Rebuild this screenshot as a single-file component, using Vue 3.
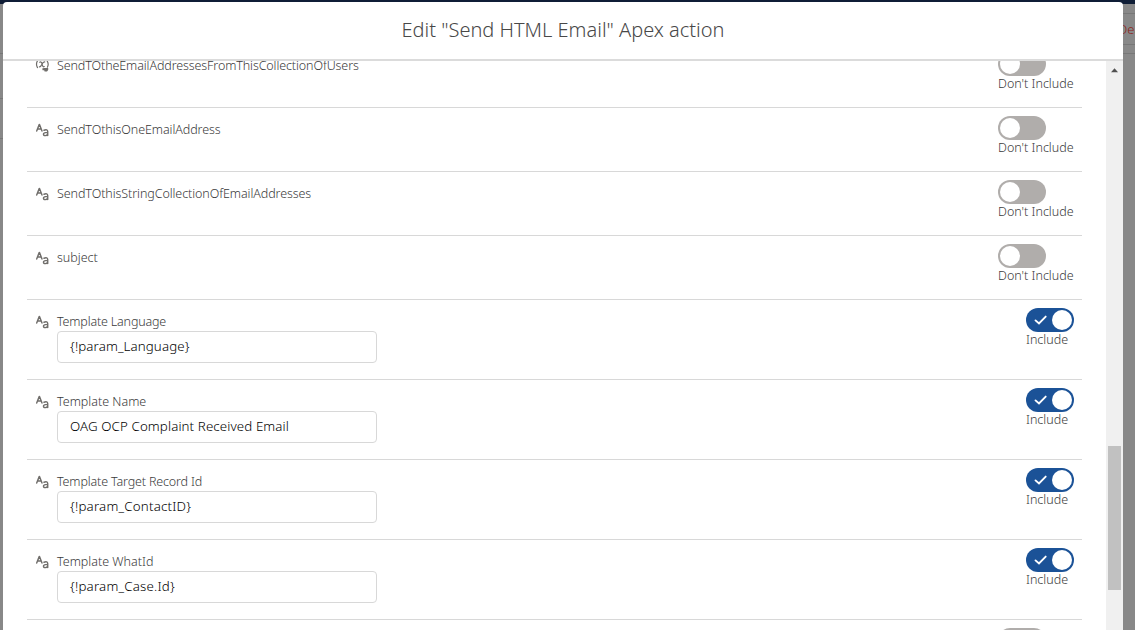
<script setup>
const rows = [
  { label: 'SendTOtheEmailAddressesFromThisCollectionOfUsers', icon: 'collection', tone: 'l1' },
  { label: 'SendTOthisOneEmailAddress', tone: 'l2' },
  { label: 'SendTOthisStringCollectionOfEmailAddresses', tone: 'l3' },
  { label: 'subject', tone: 'l4' },
  { label: 'Template Language', value: '{!param_Language}', tone: 'l5' },
  { label: 'Template Name', value: 'OAG OCP Complaint Received Email', tone: 'l6' },
  { label: 'Template Target Record Id', value: '{!param_ContactID}', tone: 'l7' },
  { label: 'Template WhatId', value: '{!param_Case.Id}', tone: 'l8' },
  { label: '', icon: 'none', tone: 'l9' },
]
</script>

<template>
  <div class="page">
    <div class="gutter left">
      <div class="strip"></div>
      <i class="gl a"></i><i class="gl b"></i><i class="gl c"></i>
    </div>
    <div class="center">
      <div class="topbar"></div>
      <section class="modal">
        <header><h2>Edit "Send HTML Email" Apex action</h2></header>
        <div class="body">
          <div class="list">
            <div v-for="r in rows" :key="r.tone" class="row" :class="{ tall: r.value }">
              <svg v-if="r.icon === 'collection'" class="icon" viewBox="0 0 14 14">
                <g fill="none" stroke="#706e6b" stroke-width="1.2" stroke-linecap="round">
                  <path d="M2.7 1.5Q.4 5 2.5 8.6M11.9 1.5Q14.2 5 12.4 8.2M4.7 3.2Q6.5 2.2 7.1 5Q7.7 8.5 9.2 7.6M9.7 2.8Q8.2 2.6 7.1 5Q5.8 8 4.4 7.8" />
                </g>
                <path d="M7.2 9.6 9 8.9H13.2V11L12 12.4H9.6L9.2 11.2H7.6Z" fill="#706e6b" />
              </svg>
              <svg v-else-if="!r.icon" class="icon" viewBox="0 0 14 14">
                <g fill="none" stroke="#706e6b" stroke-width="1.45" stroke-linecap="round" stroke-linejoin="round">
                  <path d="M1.7 8 4.2 1.5H4.5L7 8M2.5 6H6.2" />
                  <path d="M9 7.2Q12.5 6 12.7 8.5V12.6M12.5 9.6H10.6Q8.5 9.7 8.5 11.2T10.4 12.6Q11.9 12.5 12.6 11.5" />
                </g>
              </svg>
              <span v-else class="icon"></span>
              <div class="field">
                <div class="label" :class="r.tone"><span>{{ r.label }}</span></div>
                <div v-if="r.value" class="input" :class="'v' + r.tone"><span>{{ r.value }}</span></div>
              </div>
              <div class="control" :class="{ on: r.value }">
                <div class="toggle">
                  <svg v-if="r.value" viewBox="0 0 14 12"><path d="M1.5 6.4 5 9.5 11.7 2.6" fill="none" stroke="#fff" stroke-width="1.9" stroke-linecap="round" /></svg>
                  <b></b>
                </div>
                <div v-if="r.label" class="state">{{ r.value ? 'Include' : "Don't Include" }}</div>
              </div>
            </div>
          </div>
          <div class="scrollbar">
            <svg viewBox="0 0 17 17"><path d="M5 11.2H12L8.5 7.3Z" fill="#505050" /></svg>
            <div class="thumb"></div>
          </div>
        </div>
      </section>
    </div>
    <div class="gutter right">
      <div class="strip"></div>
      <i class="gl d"></i><i class="gl e"></i><i class="gl a"></i>
      <span class="del">Dea</span>
    </div>
  </div>
</template>

<style>
body { margin: 0; overflow: hidden; }
</style>

<style scoped>
* { box-sizing: border-box; }
.page {
  width: 1135px; height: 630px; display: flex; overflow: hidden;
  background: #888; font-family: "Noto Sans", "Open Sans", sans-serif; font-size: 12px; font-weight: 300; color: #333;
}
.gutter { position: relative; overflow: hidden; flex: none; }
.left { width: 3px; }
.right { width: 12px; }
.strip { height: 4px; background: #0f1d36; }
.gl { position: absolute; left: 0; right: 0; height: 1px; background: #777; }
.a { top: 53px; } .b { top: 98px; } .c { top: 138px; } .d { top: 13px; } .e { top: 44px; }
.del { position: absolute; left: -5px; top: 20px; font-size: 13px; line-height: 18px; color: #8c1f1c; }
.center { width: 1120px; display: flex; flex-direction: column; background: linear-gradient(#0f1d36, #0f1d36) no-repeat; background-size: 100% 4px; }
.topbar { height: 2px; flex: none; }
.modal { flex: 1; min-height: 0; background: #fff; border-radius: 4px 4px 0 0; display: flex; flex-direction: column; overflow: hidden; }
header { height: 59px; flex: none; border-bottom: 2px solid #dbdbdb; display: flex; justify-content: center; }
h2 { margin: 0; font-size: 20px; font-weight: 300; line-height: 56px; color: #484848; white-space: nowrap; }
.body { flex: 1; min-height: 0; display: flex; justify-content: space-between; overflow: hidden; }
.list { margin: -17px 0 0 24px; width: 1055px; flex: none; }
.row { height: 64px; border-bottom: 1px solid #d8d8d8; display: flex; padding: 8px 8px 0; }
.row.tall { height: 80px; }
.icon { width: 14px; height: 14px; margin: 7px 8px 0 0; flex: none; }
.field { flex: 1; }
.label { height: 23px; line-height: 27px; white-space: nowrap; color: #3a3a3a; font-size: 12.5px; }
.l1 { letter-spacing: -0.105px; }
.l2, .l3 { letter-spacing: -0.08px; }
.l5 { letter-spacing: -0.17px; }
.l7 { letter-spacing: -0.15px; }
.input { width: 320px; height: 32px; border: 1px solid #d8d8d8; border-radius: 4px; padding-left: 12px; font-size: 13.3px; line-height: 29px; color: #000; white-space: nowrap; }
.vl5, .vl6 { letter-spacing: 0.11px; }
.vl7, .vl8 { letter-spacing: 0.2px; }
.control { width: 76px; flex: none; white-space: nowrap; }
.control.on { width: 48px; }
.toggle { width: 48px; height: 24px; border-radius: 12px; background: #b0adab; padding: 2px; display: flex; align-items: center; }
.toggle b { width: 20px; height: 20px; border-radius: 50%; background: #fff; }
.on .toggle { background: #1b5297; justify-content: space-between; padding-left: 8px; }
.toggle svg { width: 14px; height: 12px; }
.state { line-height: 15px; color: #3a3a3a; font-size: 12.5px; }
.scrollbar { width: 17px; background: #f0f0f0; padding: 0 2px; flex: none; }
.scrollbar svg { display: block; width: 17px; height: 17px; margin-left: -2px; }
.thumb { margin-top: 368px; height: 144px; width: 13px; background: #c1c1c1; }
</style>
